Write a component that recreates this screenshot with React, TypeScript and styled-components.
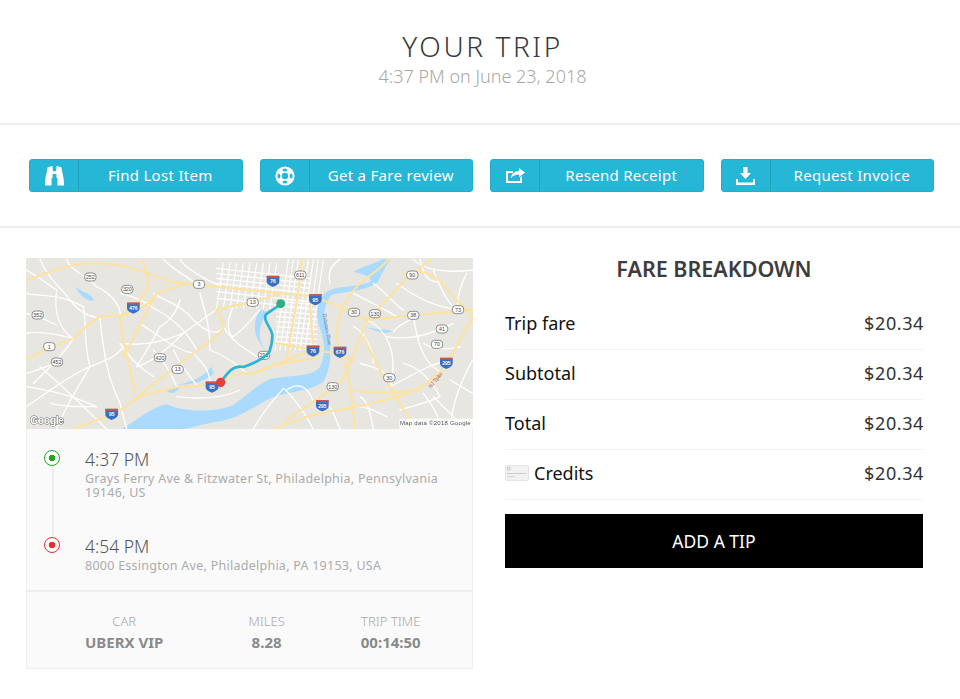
import styled, { createGlobalStyle } from "styled-components";

const GlobalStyle = createGlobalStyle`
  html, body {
    margin: 0;
    padding: 0;
    background: #fff;
  }
  body {
    font-family: "Noto Sans", "DejaVu Sans", sans-serif;
  }
`;

const teal = "#25b7d5";

const yellowRoads = [
  "M18 92 C100 62 150 38 230 40 S360 60 450 95 L610 112 L780 130 L880 140 L960 170 L1040 210 L1180 196 L1358 180",
  "M368 28 C372 60 390 90 384 112 C370 150 330 180 302 200 C300 250 318 300 328 350 L345 425",
  "M18 328 C60 310 90 290 160 266 C190 240 220 205 240 200 L300 196 C340 190 390 165 410 130 L500 100",
  "M160 537 L280 492 C310 480 340 450 360 440 C400 425 430 420 470 412 L560 405 C600 395 640 372 680 370 C720 372 740 350 790 335 L870 300 L905 290",
  "M340 450 C400 400 470 350 520 310 C560 280 610 250 612 225 C600 200 590 190 590 178 L700 156 L780 130",
  "M760 278 L870 298 L960 312 L1000 335",
  "M848 28 C840 90 825 190 812 260 L800 335",
  "M1005 537 C1000 480 990 400 978 350 C960 300 945 260 950 240 C955 200 975 150 1010 110 C1040 80 1080 60 1105 28",
  "M1358 205 C1320 260 1300 320 1260 365 C1210 420 1150 440 1010 470 C950 480 900 490 860 500 L760 537",
  "M1040 210 C1020 260 990 340 975 375 C960 410 930 420 880 455 L800 510",
  "M1030 260 C1060 320 1080 370 1110 410 C1140 460 1170 510 1185 537",
  "M1000 420 C1040 430 1120 430 1200 420",
  "M1040 210 C1080 170 1130 120 1150 95 C1170 70 1210 50 1232 28",
  "M1150 72 C1190 60 1230 62 1262 95 C1290 130 1320 160 1358 200",
  "M870 150 L878 280",
  "M308 320 C340 280 360 210 410 130",
  "M700 370 C740 350 790 335 890 325",
];

const whiteRoads = [
  "M60 28 C80 80 120 110 150 150 C190 200 220 200 240 205",
  "M18 130 C60 140 120 130 190 170",
  "M18 250 C60 240 120 255 160 266",
  "M110 120 C100 190 120 240 160 266",
  "M40 400 C70 370 120 330 160 266",
  "M18 470 C80 430 140 380 210 350 C260 330 290 320 310 290",
  "M110 537 C130 480 170 420 210 350",
  "M240 205 C250 300 260 380 300 460 L320 537",
  "M60 350 C110 390 200 480 260 537",
  "M18 410 C80 420 140 430 230 470",
  "M230 110 C270 130 300 160 302 200",
  "M430 28 C470 70 510 80 530 105",
  "M480 28 C500 60 560 90 610 112",
  "M410 180 C450 200 500 240 530 300",
  "M360 220 C420 260 470 300 520 310",
  "M310 280 C370 290 440 270 490 250 L590 178",
  "M350 350 C390 340 440 300 490 250",
  "M400 130 C450 160 490 170 520 210 C560 250 600 260 612 225",
  "M470 412 C450 360 430 330 400 300",
  "M520 310 C560 350 570 370 570 405",
  "M610 230 C640 280 680 300 720 325",
  "M570 300 C620 320 650 340 680 370",
  "M640 260 C680 230 700 200 720 180",
  "M880 537 C850 480 810 430 790 415",
  "M700 537 C730 480 770 440 790 415",
  "M960 537 C940 490 930 460 910 450",
  "M1060 537 C1050 480 1040 450 1020 440",
  "M1110 410 C1170 380 1230 340 1290 330",
  "M1040 210 C1090 230 1140 300 1110 410",
  "M1100 260 C1160 270 1220 260 1300 220",
  "M1180 196 C1190 260 1200 330 1260 365",
  "M1240 60 C1260 110 1280 160 1310 178",
  "M1060 100 C1100 130 1120 160 1150 180",
  "M1130 100 C1170 130 1230 170 1310 178",
  "M1000 230 C1030 240 1060 300 1060 340",
  "M1240 440 C1270 470 1310 510 1340 537",
  "M1210 430 C1240 470 1260 500 1260 537",
  "M1358 330 C1320 400 1300 450 1290 537",
  "M1290 390 L1358 430",
  "M1150 340 C1200 350 1240 400 1260 440",
  "M930 100 C920 60 940 40 960 28",
  "M1180 28 C1210 60 1280 70 1358 60",
  "M140 28 C150 60 190 70 230 110",
  "M18 60 C60 80 90 110 110 120",
  "M18 190 C60 200 90 215 110 225",
  "M190 170 C200 220 190 280 210 350",
  "M18 370 C60 360 90 345 111 336",
  "M90 460 C130 470 170 470 230 470",
  "M300 130 C350 140 380 160 410 180",
  "M300 280 C330 330 370 360 400 380",
  "M420 230 C400 270 380 300 350 350",
  "M460 300 C480 340 500 370 530 405",
  "M540 130 C550 170 570 220 570 300",
  "M480 150 C470 190 440 220 420 230",
  "M640 170 C620 210 620 250 640 260",
  "M660 420 C620 440 560 450 470 440",
  "M1000 130 C1060 160 1100 180 1130 200",
  "M1120 245 C1140 220 1170 210 1190 200",
  "M1210 280 C1240 300 1280 300 1320 290",
  "M1340 70 C1320 110 1310 150 1314 178",
  "M1020 340 C1050 350 1080 350 1108 383",
  "M1140 480 C1170 470 1220 460 1260 440",
  "M1100 500 C1060 480 1040 470 1010 470",
  "M800 420 C830 400 860 400 880 455",
  "M1200 28 C1210 70 1220 100 1262 95",
];

const cityStreets = [
  ...[610, 630, 650, 670, 690, 710, 730, 750, 770].map((x) => `M${x} 40 L${x - 20} 175`),
  ...[790, 805, 820, 835, 850, 865, 880, 895].map((x) => `M${x + 15} 30 L${x - 25} 300`),
  ...[155, 170, 185, 200, 215, 230, 245, 260, 275].map((y) => `M770 ${y} L890 ${y + 8}`),
  ...[55, 70, 85, 100, 125, 145].map((y) => `M590 ${y} L870 ${y + 30}`),
];

const greyShields = [
  { x: 211, y: 81, t: "252" },
  { x: 322, y: 118, t: "320" },
  { x: 53, y: 195, t: "352" },
  { x: 537, y: 103, t: "3" },
  { x: 698, y: 157, t: "13" },
  { x: 841, y: 75, t: "611" },
  { x: 1002, y: 187, t: "30" },
  { x: 1065, y: 191, t: "130" },
  { x: 1177, y: 75, t: "90" },
  { x: 1180, y: 196, t: "38" },
  { x: 1314, y: 179, t: "73" },
  { x: 1266, y: 237, t: "41" },
  { x: 1251, y: 283, t: "70" },
  { x: 88, y: 290, t: "1" },
  { x: 111, y: 336, t: "452" },
  { x: 420, y: 323, t: "420" },
  { x: 473, y: 358, t: "13" },
  { x: 732, y: 316, t: "291" },
  { x: 1108, y: 383, t: "30" },
  { x: 938, y: 410, t: "130" },
];

const interstates = [
  { x: 759, y: 92, t: "76" },
  { x: 340, y: 172, t: "476" },
  { x: 886, y: 147, t: "95" },
  { x: 879, y: 301, t: "76" },
  { x: 960, y: 305, t: "676" },
  { x: 1279, y: 338, t: "295" },
  { x: 576, y: 409, t: "95" },
  { x: 275, y: 491, t: "95" },
  { x: 907, y: 465, t: "295" },
];

const RouteMap = () => (
  <MapFrame>
    <svg viewBox="18 24 1341 513" width="100%" height="100%" preserveAspectRatio="none">
      <rect x="18" y="24" width="1341" height="513" fill="#e8e6e1" />
      <g fill="#aadafe">
        <path d="M305 537 C350 510 400 470 440 462 C480 485 580 490 640 465 C690 430 720 395 760 385 C820 375 880 380 900 350 C915 320 915 290 905 250 C890 210 880 170 915 130 C940 105 1000 115 1050 95 C1060 80 1020 70 1000 65 C1040 45 1070 40 1085 28 L1110 28 C1095 55 1085 70 1075 95 C1040 125 960 125 935 135 C905 170 910 210 925 260 C940 320 925 370 910 395 C860 430 800 420 740 450 C690 480 640 510 590 515 C530 525 510 537 480 537 Z" />
        <path d="M165 110 C185 125 215 130 222 150 C210 155 190 150 165 110 Z" />
        <path d="M560 410 C600 400 615 405 605 415 C590 422 565 420 560 410 Z" />
        <path d="M470 405 C510 395 540 390 575 350 L580 370 C560 395 510 405 470 405 Z" />
        <path d="M720 180 C695 220 700 260 735 300 C710 265 715 220 745 185 Z" />
        <path d="M1030 230 C1070 240 1100 235 1120 245 L1090 250 Z" />
        <path d="M440 425 L460 410 L480 415 L460 430 Z" />
      </g>
      <g fill="none" stroke="#fff" strokeLinecap="round" strokeLinejoin="round">
        <g strokeWidth="4">
          {whiteRoads.map((d) => (
            <path key={d} d={d} />
          ))}
        </g>
        <g strokeWidth="3.5">
          {cityStreets.map((d) => (
            <path key={d} d={d} />
          ))}
        </g>
      </g>
      <g fill="none" stroke="#fee39e" strokeWidth="6" strokeLinecap="round" strokeLinejoin="round">
        {yellowRoads.map((d) => (
          <path key={d} d={d} />
        ))}
      </g>
      {greyShields.map((s) => (
        <g key={`${s.x}-${s.t}`}>
          <rect x={s.x - 17} y={s.y - 12} width="34" height="24" rx="10" fill="#fff" stroke="#777" strokeWidth="2.5" />
          <text x={s.x} y={s.y + 6} textAnchor="middle" fontSize="16" fontFamily="Liberation Sans, sans-serif" fill="#444">
            {s.t}
          </text>
        </g>
      ))}
      {interstates.map((s) => (
        <g key={`${s.x}-${s.t}`}>
          <path
            d={`M${s.x - 19} ${s.y - 13} H${s.x + 19} V${s.y + 2} C${s.x + 19} ${s.y + 12} ${s.x + 8} ${s.y + 15} ${s.x} ${s.y + 19} C${s.x - 8} ${s.y + 15} ${s.x - 19} ${s.y + 12} ${s.x - 19} ${s.y + 2} Z`}
            fill="#3a70c4"
          />
          <rect x={s.x - 19} y={s.y - 15} width="38" height="6" fill="#c9554e" />
          <text x={s.x} y={s.y + 8} textAnchor="middle" fontSize="15" fontWeight="bold" fontFamily="Liberation Sans, sans-serif" fill="#fff">
            {s.t}
          </text>
        </g>
      ))}
      <text x="1245" y="396" fontSize="15" fontFamily="Liberation Sans, sans-serif" fill="#a8562f" transform="rotate(-50 1245 390)" textAnchor="middle">
        NJ Tpke
      </text>
      <text x="917" y="240" fontSize="14" fontFamily="Liberation Sans, sans-serif" fill="#4a7fb5" transform="rotate(80 917 240)" textAnchor="middle">
        Delaware River
      </text>
      <path
        d="M783 162 C760 180 745 185 737 195 C728 210 755 235 757 255 C757 275 752 295 748 305 C735 325 700 340 670 351 C640 345 625 365 602 397"
        fill="none"
        stroke="#2bb5d3"
        strokeWidth="8"
        strokeLinecap="round"
        strokeLinejoin="round"
      />
      <circle cx="782" cy="161" r="13.5" fill="#31ae7f" />
      <circle cx="602" cy="397" r="14" fill="#ec3d3d" />
      <text x="30" y="523" fontSize="32" fontWeight="bold" fontFamily="Liberation Sans, sans-serif" fill="#fff" stroke="#555" strokeWidth="2.5" paintOrder="stroke" textLength="102">
        Google
      </text>
      <rect x="1138" y="506" width="221" height="31" fill="#fff" fillOpacity="0.75" />
      <text x="1140" y="525" fontSize="18" fontFamily="Liberation Sans, sans-serif" fill="#555" textLength="212">
        Map data ©2018 Google
      </text>
    </svg>
  </MapFrame>
);

const BinocularsIcon = () => (
  <svg width="19" height="20" viewBox="0 0 19 20" fill="#fff">
    <path d="M2.6 1.2 L7.4 0 L8 5.2 H11 L11.6 0 L16.4 1.2 L17.2 6 C18.4 10 19 14 19 19.4 H12.4 V12 H11.4 V8 H7.6 V12 H6.6 V19.4 H0 C0 14 0.6 10 1.8 6 Z" />
  </svg>
);

const LifeRingIcon = () => (
  <svg width="20" height="20" viewBox="0 0 20 20">
    <circle cx="10" cy="10" r="9.6" fill="#fff" />
    <circle cx="10" cy="10" r="3.2" fill={teal} />
    <g fill={teal}>
      <ellipse cx="3.9" cy="10" rx="1.5" ry="2.5" />
      <ellipse cx="16.1" cy="10" rx="1.5" ry="2.5" />
      <ellipse cx="10" cy="3.9" rx="2.5" ry="1.5" />
      <ellipse cx="10" cy="16.1" rx="2.5" ry="1.5" />
    </g>
  </svg>
);

const ShareIcon = () => (
  <svg width="19" height="15" viewBox="0 0 19 15" fill="#fff">
    <path d="M0 3 H7 V5 H2 V13 H14 V9.5 L16 8 V15 H0 Z" />
    <path d="M13 0 L19 4.6 L13 9.2 V6.4 C9.5 6.4 6.8 7.4 4.8 10.4 C5.2 6 8.2 3 13 2.9 Z" />
  </svg>
);

const DownloadIcon = () => (
  <svg width="19" height="18" viewBox="0 0 19 18" fill="#fff">
    <path d="M7.4 0 H11.6 V6 H15 L9.5 12 L4 6 H7.4 Z" />
    <path d="M0 12 H2 V15.6 H17 V12 H19 V18 H0 Z" />
  </svg>
);

const CardIcon = () => (
  <svg width="24" height="16" viewBox="0 0 24 16">
    <rect x="0.5" y="0.5" width="23" height="15" rx="1.5" fill="#f1f1f1" stroke="#e4e4e4" />
    <rect x="2.5" y="2.5" width="2.5" height="2.5" fill="none" stroke="#bbb" strokeWidth="0.7" />
    <rect x="2" y="8" width="19" height="1" fill="#c9c9c9" />
    <rect x="2" y="11.2" width="8" height="1" fill="#d4d4d4" />
  </svg>
);

const actions = [
  { label: "Find Lost Item", icon: <BinocularsIcon /> },
  { label: "Get a Fare review", icon: <LifeRingIcon /> },
  { label: "Resend Receipt", icon: <ShareIcon /> },
  { label: "Request Invoice", icon: <DownloadIcon /> },
];

const fareRows = [
  { label: "Trip fare", amount: "$20.34" },
  { label: "Subtotal", amount: "$20.34" },
  { label: "Total", amount: "$20.34" },
  { label: "Credits", amount: "$20.34", card: true },
];

const stats = [
  { label: "CAR", value: "UBERX VIP", gap: 0 },
  { label: "MILES", value: "8.28", gap: 85 },
  { label: "TRIP TIME", value: "00:14:50", gap: 76 },
];

const App = () => {
  return (
    <Page>
      <GlobalStyle />
      <Header>
        <Title>YOUR TRIP</Title>
        <Subtitle>4:37 PM on June 23, 2018</Subtitle>
      </Header>
      <Actions>
        {actions.map((action) => (
          <ActionButton key={action.label}>
            <IconCell>{action.icon}</IconCell>
            <ActionLabel>{action.label}</ActionLabel>
          </ActionButton>
        ))}
      </Actions>
      <Content>
        <TripCard>
          <RouteMap />
          <Timeline>
            <Stop>
              <Marker $color="#22a61c" />
              <StopTime>4:37 PM</StopTime>
              <StopAddress>
                Grays Ferry Ave &amp; Fitzwater St, Philadelphia, Pennsylvania 19146, US
              </StopAddress>
            </Stop>
            <Stop $last>
              <Marker $color="#f22a2a" />
              <StopTime>4:54 PM</StopTime>
              <StopAddress>8000 Essington Ave, Philadelphia, PA 19153, USA</StopAddress>
            </Stop>
          </Timeline>
          <Stats>
            {stats.map((stat) => (
              <Stat key={stat.label} $gap={stat.gap}>
                <StatLabel>{stat.label}</StatLabel>
                <StatValue>{stat.value}</StatValue>
              </Stat>
            ))}
          </Stats>
        </TripCard>
        <Fare>
          <FareTitle>FARE BREAKDOWN</FareTitle>
          {fareRows.map((row) => (
            <FareRow key={row.label}>
              <FareLabel>
                {row.card && <CardIcon />}
                {row.label}
              </FareLabel>
              <FareAmount>{row.amount}</FareAmount>
            </FareRow>
          ))}
          <TipButton>ADD A TIP</TipButton>
        </Fare>
      </Content>
    </Page>
  );
};
export default App;

const Page = styled.div`
  width: 960px;
  height: 699px;
  overflow: hidden;
`;

const Header = styled.header`
  height: 94px;
  padding: 28px 0 1px 5px;
  border-bottom: 2px solid #eeeeee;
  text-align: center;
`;

const Title = styled.h1`
  margin: 0;
  font-size: 28px;
  line-height: 36px;
  font-weight: 300;
  letter-spacing: 2.6px;
  color: #3a3a3a;
`;

const Subtitle = styled.p`
  margin: 1px 0 0;
  font-size: 18px;
  line-height: 22px;
  font-weight: 300;
  color: #a8a8a8;
`;

const Actions = styled.div`
  display: grid;
  grid-template-columns: repeat(4, 1fr);
  column-gap: 17px;
  padding: 34px 26px 34px 29px;
  border-bottom: 2px solid #eeeeee;
`;

const ActionButton = styled.button`
  display: flex;
  align-items: stretch;
  height: 33px;
  padding: 0;
  background: ${teal};
  border: 1px solid #22aeca;
  border-radius: 3px;
  color: #fff;
  font-family: inherit;
`;

const IconCell = styled.span`
  display: flex;
  align-items: center;
  justify-content: center;
  width: 48px;
  flex-shrink: 0;
  border-right: 1px solid #1fa3bd;
`;

const ActionLabel = styled.span`
  flex: 1;
  align-self: center;
  margin-top: -2px;
  font-size: 15px;
  text-align: center;
  letter-spacing: 0.3px;
`;

const Content = styled.div`
  display: flex;
  padding: 30px 37px 0 26px;
  gap: 32px;
`;

const TripCard = styled.section`
  width: 447px;
  flex-shrink: 0;
  box-sizing: border-box;
  background: #fafafa;
  border: 1px solid #eeeeee;
  height: 411px;
`;

const MapFrame = styled.div`
  height: 171px;
  margin: -1px -1px 0;
  filter: blur(0.5px);
`;

const Timeline = styled.div`
  height: 163px;
  box-sizing: border-box;
  padding: 21px 30px 0 58px;
  border-bottom: 2px solid #eeeeee;
`;

const Stop = styled.div<{ $last?: boolean }>`
  position: relative;
  min-height: 87px;

  &::before {
    content: "";
    display: ${(p) => (p.$last ? "none" : "block")};
    position: absolute;
    left: -33px;
    top: 16px;
    bottom: 0;
    width: 2px;
    background: #eeeeee;
  }
`;

const Marker = styled.span<{ $color: string }>`
  position: absolute;
  left: -41px;
  top: 0;
  width: 16px;
  height: 16px;
  box-sizing: border-box;
  border: 1.5px solid ${(p) => p.$color};
  border-radius: 50%;
  background: radial-gradient(circle, ${(p) => p.$color} 0 3px, #fff 3.6px);
`;

const StopTime = styled.div`
  font-size: 17.5px;
  line-height: 18px;
  font-weight: 300;
  color: #555;
`;

const StopAddress = styled.div`
  margin-top: 4px;
  font-size: 12.5px;
  line-height: 14px;
  letter-spacing: 0.26px;
  color: #ababab;
`;

const Stats = styled.div`
  display: flex;
  padding: 20px 0 0 58px;
`;

const Stat = styled.div<{ $gap: number }>`
  margin-left: ${(p) => p.$gap}px;
  text-align: center;
`;

const StatLabel = styled.div`
  font-size: 13px;
  line-height: 19px;
  font-weight: 300;
  color: #a8a8a8;
`;

const StatValue = styled.div`
  font-size: 15px;
  line-height: 22px;
  font-weight: 700;
  color: #8a8a8a;
`;

const Fare = styled.section`
  flex: 1;
`;

const FareTitle = styled.h2`
  margin: -1px 0 0;
  padding-bottom: 19px;
  font-size: 21.5px;
  line-height: 24px;
  font-weight: 600;
  text-align: center;
  color: #3d3d3d;
`;

const FareRow = styled.div`
  display: flex;
  align-items: center;
  justify-content: space-between;
  height: 50px;
  box-sizing: border-box;
  padding-bottom: 4px;
  border-bottom: 1px solid #f2f2f2;
  font-size: 18px;
  color: #111;
`;

const FareLabel = styled.span`
  display: flex;
  align-items: center;
  gap: 5px;
`;

const FareAmount = styled.span`
  margin-right: -1px;
  letter-spacing: 0.6px;
  color: #333;
`;

const TipButton = styled.button`
  display: block;
  width: 100%;
  height: 54px;
  margin-top: 14px;
  background: #000;
  border: 0;
  color: #fff;
  font-family: inherit;
  font-size: 17.5px;
`;
